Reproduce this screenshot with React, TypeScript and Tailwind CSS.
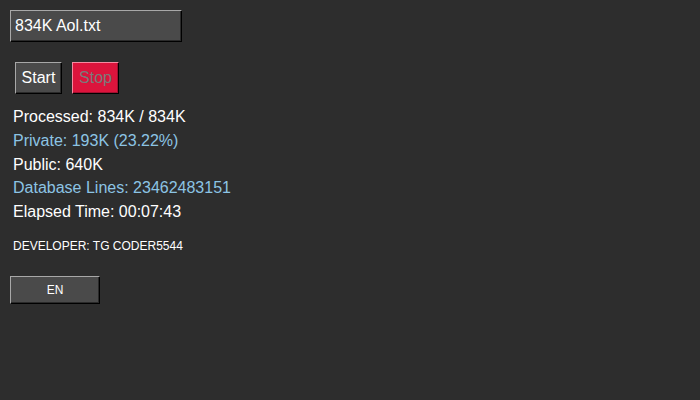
import { useState } from "react";

const bevel =
  "border border-t-[#a8a8a8] border-l-[#a8a8a8] border-b-black border-r-black shadow-[inset_-1px_-1px_0_#2a2a2a]";

export default function App() {
  const [file] = useState("834K Aol.txt");

  return (
    <div className="h-[400px] w-[700px] bg-[#2d2d2d] font-['Liberation_Sans',Arial,sans-serif] text-white">
      <div className="flex flex-col items-start px-[10px] pt-[10px]">
        <input
          readOnly
          value={file}
          className={`h-[32px] w-[172px] bg-[#4a4a4a] px-[4px] text-[16px] text-white outline-none ${bevel}`}
        />

        <div className="mt-[20px] ml-[5px] flex gap-[10px]">
          <button className={`h-[32px] w-[47px] bg-[#4a4a4a] text-[16px] text-white ${bevel}`}>Start</button>
          <button
            disabled
            className="h-[32px] w-[47px] border border-t-[#f58aa0] border-l-[#f58aa0] border-b-black border-r-black bg-[#dc143c] text-[16px] text-[#7a7a7a] shadow-[inset_-1px_-1px_0_#a01030]"
          >
            Stop
          </button>
        </div>

        <div className="mt-[11px] ml-[3px] flex flex-col text-[16px] leading-[23.75px]">
          <div>Processed: 834K / 834K</div>
          <div className="text-[#8cc4e4]">Private: 193K (23.22%)</div>
          <div>Public: 640K</div>
          <div className="text-[#8cc4e4]">Database Lines: 23462483151</div>
          <div>Elapsed Time: 00:07:43</div>
        </div>

        <div className="mt-[14px] ml-[3px] text-[12px] leading-[16px]">DEVELOPER: TG CODER5544</div>

        <button className={`mt-[22px] h-[28px] w-[90px] bg-[#4a4a4a] text-[12px] text-white ${bevel}`}>EN</button>
      </div>
    </div>
  );
}
